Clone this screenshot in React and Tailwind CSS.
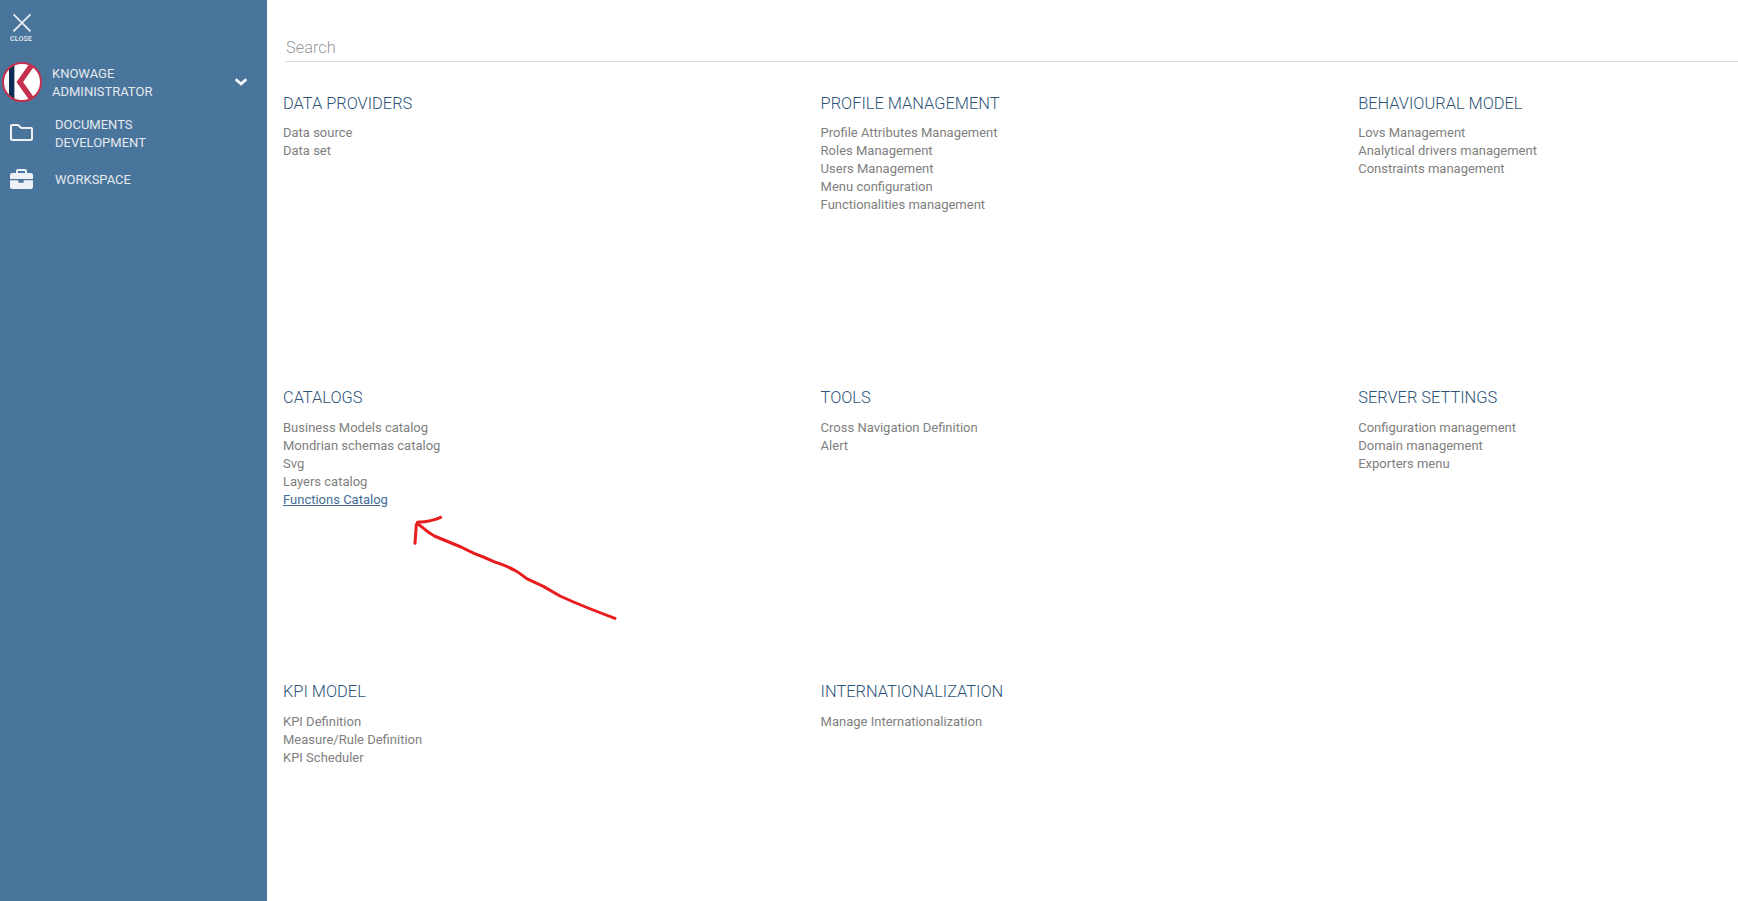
const sections = [
  { title: "DATA PROVIDERS", items: ["Data source", "Data set"] },
  {
    title: "PROFILE MANAGEMENT",
    items: ["Profile Attributes Management", "Roles Management", "Users Management", "Menu configuration", "Functionalities management"],
  },
  { title: "BEHAVIOURAL MODEL", items: ["Lovs Management", "Analytical drivers management", "Constraints management"] },
  {
    title: "CATALOGS",
    items: ["Business Models catalog", "Mondrian schemas catalog", "Svg", "Layers catalog", "Functions Catalog"],
    active: "Functions Catalog",
  },
  { title: "TOOLS", items: ["Cross Navigation Definition", "Alert"] },
  { title: "SERVER SETTINGS", items: ["Configuration management", "Domain management", "Exporters menu"] },
  { title: "KPI MODEL", items: ["KPI Definition", "Measure/Rule Definition", "KPI Scheduler"] },
  { title: "INTERNATIONALIZATION", items: ["Manage Internationalization"] },
];

function Logo() {
  return (
    <svg className="ml-[2px] h-10 w-10 shrink-0" viewBox="0 0 40 40">
      <defs>
        <clipPath id="disc">
          <circle cx="20" cy="20" r="19" />
        </clipPath>
      </defs>
      <circle cx="20" cy="20" r="19" fill="#fff" />
      <g clipPath="url(#disc)">
        <rect x="7" y="0" width="5.4" height="40" fill="#0d2c54" />
        <path d="M30.5 2 17.8 20 30.5 38" fill="none" stroke="#c5304f" strokeWidth="5.4" />
      </g>
      <circle cx="20" cy="20" r="19" fill="none" stroke="#c5304f" strokeWidth="2" />
    </svg>
  );
}

function Sidebar() {
  return (
    <aside className="flex w-[267px] shrink-0 flex-col bg-[#49749b] text-[13px] leading-[18px] text-[#e3eaf0]">
      <button className="mt-[13px] ml-[9px] flex w-6 flex-col items-center">
        <svg className="ml-[2px] h-[19px] w-[19px]" viewBox="0 0 19 19" fill="none" stroke="#edf1f5" strokeWidth="1.7">
          <path d="M.5 1.3 17.5 18.3M17.5 1.3 .5 18.3" />
        </svg>
        <span className="mt-[3px] text-[7.3px] leading-[8px] font-medium">CLOSE</span>
      </button>
      <div className="mt-[19px] flex h-10 items-center">
        <Logo />
        <div className="ml-[10px] flex-1 pt-[2px]">
          KNOWAGE
          <br />
          ADMINISTRATOR
        </div>
        <svg className="mr-[19px] h-2 w-[14px]" viewBox="0 0 14 8" fill="none" stroke="#fff" strokeWidth="2.6">
          <path d="M1.7 1.2 7 6 12.3 1.2" />
        </svg>
      </div>
      <div className="mt-[13px] flex h-9 items-center">
        <svg className="mb-px ml-[10px] h-[17px] w-[23px]" viewBox="0 0 23 17" fill="none" stroke="#edf1f5" strokeWidth="2" strokeLinejoin="round">
          <path d="M1 2Q1 1 2 1H8L11.3 4H21Q22 4 22 5V15Q22 16 21 16H2Q1 16 1 15Z" />
        </svg>
        <div className="ml-[22px] pt-[2px]">
          DOCUMENTS
          <br />
          DEVELOPMENT
        </div>
      </div>
      <div className="mt-[13px] flex h-[30px] items-center">
        <svg className="ml-[10px] h-5 w-[23px]" viewBox="0 0 23 20" fill="#edf1f5">
          <path d="M6 4V2Q6 0 8 0H15Q17 0 17 2V4H21Q23 4 23 6V10H0V6Q0 4 2 4ZM8 4H15V2H8Z" fillRule="evenodd" />
          <path d="M0 11.2H8.3V13Q8.3 13.7 9 13.7H13Q13.7 13.7 13.7 13V11.2H23V18Q23 20 21 20H2Q0 20 0 18Z" />
        </svg>
        <div className="ml-[22px] pt-[2px]">WORKSPACE</div>
      </div>
    </aside>
  );
}

function Section({ title, items, active }) {
  return (
    <section>
      <h2 className="text-[16.4px] leading-6 font-light text-[#2c5478]">{title}</h2>
      <ul className="mt-[8.35px] text-[13px] leading-[18px] text-[#808080]">
        {items.map((item) => (
          <li key={item} className={item === active ? "text-[#436d95] underline" : ""}>
            {item}
          </li>
        ))}
      </ul>
    </section>
  );
}

export default function App() {
  return (
    <div className="relative flex h-[901px] w-[1738px] overflow-hidden bg-white font-['Roboto',sans-serif]">
      <Sidebar />
      <main className="flex flex-1 flex-col">
        <div className="mt-[33px] ml-[18px] h-[29px] border-b border-[#dcdcdc] pt-px pl-[1px] text-[16.4px] leading-7 font-light text-[#999999]">Search</div>
        <div className="mt-[30px] ml-4 grid auto-rows-[294.2px] grid-cols-[537.6px_537.6px_1fr]">
          {sections.map((s) => (
            <Section key={s.title} {...s} />
          ))}
        </div>
      </main>
      <svg
        className="pointer-events-none absolute top-[500px] left-[400px] h-[130px] w-[230px]"
        viewBox="0 0 690 390"
        fill="none"
        stroke="#e81c1c"
        strokeWidth="9"
        strokeLinecap="round"
        strokeLinejoin="round"
      >
        <path d="M645 355Q550 320 480 288L430 259 380 236Q360 220 348 213C325 199 300 192 280 184L250 171 222 160 183 141 103 108C85 99 70 84 52 70L49 74 45 130M52 67Q98 64 122 52" />
      </svg>
    </div>
  );
}
